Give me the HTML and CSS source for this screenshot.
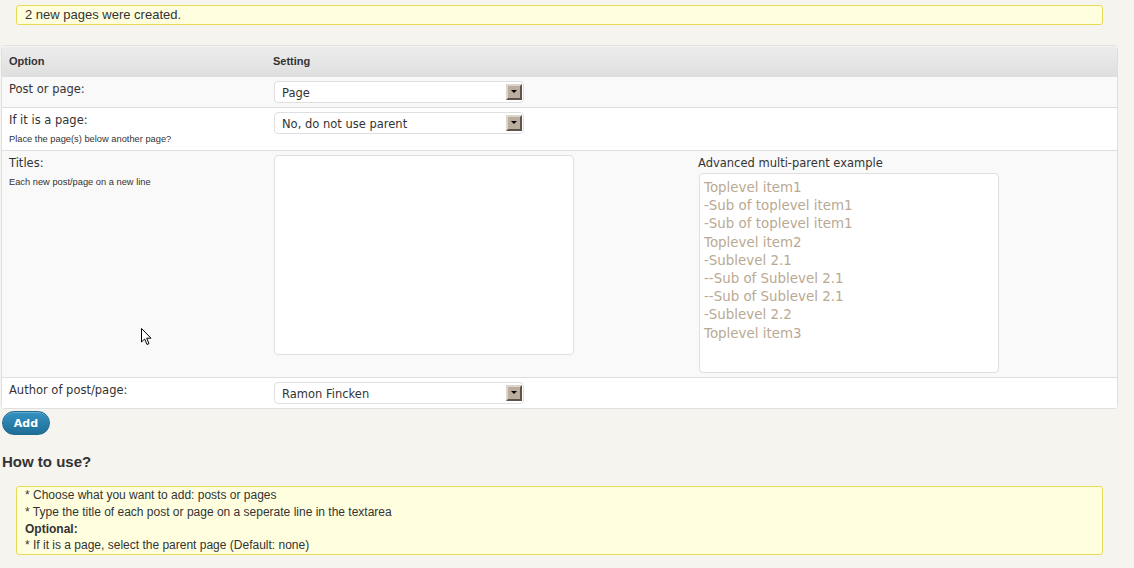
FILE: index.html
```html
<!DOCTYPE html>
<html>
<head>
<meta charset="utf-8">
<title>Bulk add pages</title>
<link rel="stylesheet" href="styles.css">
</head>
<body>
<div class="wrap">
  <div class="notice">2 new pages were created.</div>

  <table class="widefat">
    <thead>
      <tr>
        <th class="c1">Option</th>
        <th class="c2">Setting</th>
        <th class="c3"></th>
      </tr>
    </thead>
    <tbody>
      <tr class="alt">
        <td class="c1"><div class="label">Post or page:</div></td>
        <td class="c2"><div class="select"><span class="val">Page</span><span class="arrow"></span></div></td>
        <td class="c3"></td>
      </tr>
      <tr>
        <td class="c1"><div class="label">If it is a page:</div><div class="hint">Place the page(s) below another page?</div></td>
        <td class="c2"><div class="select"><span class="val">No, do not use parent</span><span class="arrow"></span></div></td>
        <td class="c3"></td>
      </tr>
      <tr class="alt">
        <td class="c1"><div class="label">Titles:</div><div class="hint">Each new post/page on a new line</div></td>
        <td class="c2"><div class="textarea"></div></td>
        <td class="c3">
          <div class="label ex-label">Advanced multi-parent example</div>
          <div class="textarea example">Toplevel item1<br>-Sub of toplevel item1<br>-Sub of toplevel item1<br>Toplevel item2<br>-Sublevel 2.1<br>--Sub of Sublevel 2.1<br>--Sub of Sublevel 2.1<br>-Sublevel 2.2<br>Toplevel item3</div>
        </td>
      </tr>
      <tr>
        <td class="c1"><div class="label">Author of post/page:</div></td>
        <td class="c2"><div class="select"><span class="val">Ramon Fincken</span><span class="arrow"></span></div></td>
        <td class="c3"></td>
      </tr>
    </tbody>
  </table>

  <button class="button-primary">Add</button>

  <h3 class="howto">How to use?</h3>

  <div class="info">
    <div>* Choose what you want to add: posts or pages</div>
    <div>* Type the title of each post or page on a seperate line in the textarea</div>
    <div><b>Optional:</b></div>
    <div>* If it is a page, select the parent page (Default: none)</div>
  </div>
</div>

<svg class="cursor" width="13" height="20" viewBox="0 0 13 20">
  <path d="M1.5 1.5 L1.5 15 L4.6 12 L7 17.5 L9 16.6 L6.7 11.2 L11 11.2 Z" fill="#fff" stroke="#000" stroke-width="1" stroke-linejoin="miter"/>
</svg>
</body>
</html>
```

FILE: styles.css
```css
html, body {
  margin: 0;
  padding: 0;
}
body {
  background: #f5f4ef;
  font-family: "Liberation Sans", Arial, sans-serif;
  color: #333;
  position: relative;
  width: 1134px;
  height: 568px;
  overflow: hidden;
}
.wrap {
  padding: 5px 0 0 1px;
}
.notice {
  margin-left: 15px;
  width: 1077px;
  height: 18px;
  line-height: 18px;
  border: 1px solid #e6db55;
  background: #ffffe0;
  border-radius: 3px;
  font-size: 13px;
  padding-left: 8px;
  color: #333;
}
.widefat {
  margin-top: 20px;
  width: 1117px;
  border: 1px solid #dfdfdf;
  border-radius: 4px;
  border-spacing: 0;
  border-collapse: separate;
  background: #f9f9f9;
  table-layout: fixed;
}
.widefat th, .widefat td {
  padding: 0;
  text-align: left;
  vertical-align: top;
  border-bottom: 1px solid #dfdfdf;
}
.widefat tbody tr:last-child td {
  border-bottom: none;
}
.widefat th {
  height: 30px;
  font-size: 11px;
  font-weight: bold;
  color: #333;
  vertical-align: middle;
  background: linear-gradient(#ededed, #dfdfdf);
  box-shadow: inset 0 1px 0 #f4f4f4;
}
.widefat th:first-child { border-top-left-radius: 3px; }
.widefat th:last-child { border-top-right-radius: 3px; }
.widefat .c1 { width: 256px; padding-left: 7px; }
.widefat .c2 { width: 417px; padding-left: 8px; }
.widefat .c3 { padding-left: 8px; }
.widefat tr { background: #fff; }
.widefat tr.alt { background: #f9f9f9; }
.widefat td.c1 { padding-top: 6px; padding-bottom: 5px; }
.widefat td.c2 { padding-top: 4px; padding-bottom: 4px; }
.widefat td.c3 { padding-top: 6px; padding-bottom: 4px; }

.label {
  font-family: "DejaVu Sans", Verdana, sans-serif;
  font-size: 11.5px;
  line-height: 13px;
  color: #333;
}
.hint {
  font-family: "Liberation Sans", Arial, sans-serif;
  font-size: 9.3px;
  line-height: 11px;
  margin-top: 7px;
  color: #333;
}
.select {
  margin-left: 1px;
  width: 240px;
  height: 20px;
  border: 1px solid #dfdfdf;
  border-radius: 4px;
  background: #fff;
  display: flex;
  align-items: center;
  justify-content: space-between;
  padding: 0 1px 0 7px;
  font-family: "DejaVu Sans", Verdana, sans-serif;
  font-size: 11.5px;
  color: #333;
}
.val { padding-top: 1px; }
.arrow {
  width: 12px;
  height: 12px;
  background: #bcae9f;
  border: 2px solid;
  border-color: #ddd5cc #5d534b #5d534b #ddd5cc;
  position: relative;
  flex: none;
}
.arrow::after {
  content: "";
  position: absolute;
  left: 3px;
  top: 4px;
  border-left: 3px solid transparent;
  border-right: 3px solid transparent;
  border-top: 3px solid #000;
}
.textarea {
  margin-left: 1px;
  width: 298px;
  height: 198px;
  border: 1px solid #dfdfdf;
  border-radius: 4px;
  background: #fff;
}
.ex-label { margin-bottom: 3px; }
.example {
  box-sizing: border-box;
  width: 300px;
  height: 200px;
  padding: 5px 4px 4px;
  font-family: "DejaVu Sans", Verdana, sans-serif;
  font-size: 13.4px;
  line-height: 18.2px;
  color: #b9a992;
}
.button-primary {
  display: block;
  margin: 2px 0 0 1px;
  width: 48px;
  height: 24px;
  border: 1px solid #1f6a90;
  border-radius: 12px;
  background: linear-gradient(#3592c2, #1f6e97);
  color: #fff;
  font-family: "DejaVu Sans", Verdana, sans-serif;
  font-weight: bold;
  font-size: 11px;
  padding: 0;
  box-shadow: inset 0 1px 0 rgba(255,255,255,0.25);
}
.howto {
  margin: 18px 0 0 1px;
  font-size: 15px;
  line-height: 18px;
  font-weight: bold;
  color: #333;
}
.info {
  margin: 15px 0 0 15px;
  width: 1077px;
  border: 1px solid #e6db55;
  background: #ffffe0;
  border-radius: 3px;
  padding: 0 0 0 8px;
  font-size: 12px;
  line-height: 16.8px;
  color: #333;
}
.cursor {
  position: absolute;
  left: 140px;
  top: 327px;
}
```
